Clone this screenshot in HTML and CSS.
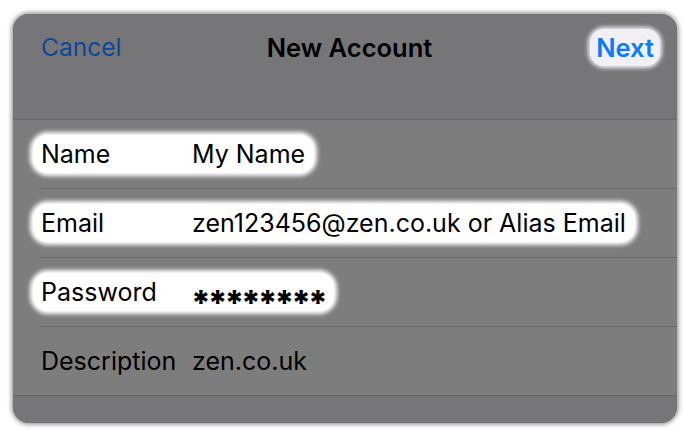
FILE: index.html
```html
<!DOCTYPE html>
<html>
<head>
<meta charset="utf-8">
<link rel="stylesheet" href="styles.css">
</head>
<body>
<div class="frame">
  <header class="header">
    <nav class="nav">
      <span class="cancel">Cancel</span>
      <span class="title">New Account</span>
      <span class="next-blob"><span class="next">Next</span></span>
    </nav>
  </header>
  <div class="form">
    <div class="row">
      <div class="field hl"><span class="label">Name</span><span class="value">My Name</span></div>
    </div>
    <div class="row">
      <div class="field hl"><span class="label">Email</span><span class="value">zen123456@zen.co.uk or Alias Email</span></div>
    </div>
    <div class="row">
      <div class="field hl"><span class="label">Password</span><span class="value pw">********</span></div>
    </div>
    <div class="row last">
      <div class="field"><span class="label">Description</span><span class="value">zen.co.uk</span></div>
    </div>
  </div>
  <div class="footer"></div>
</div>
</body>
</html>
```
FILE: styles.css
```css
html, body {
  margin: 0;
  padding: 0;
  background: #ffffff;
}
body {
  width: 686px;
  height: 434px;
  overflow: hidden;
  font-family: Inter, "Noto Sans", sans-serif;
}
.frame {
  margin: 14px 0 0 13px;
  width: 664px;
  height: 409px;
  border-radius: 16px;
  overflow: hidden;
  background: #7d7d7d;
  box-shadow: 0 0 5px 1px rgba(0,0,0,0.5);
  display: flex;
  flex-direction: column;
}
.header {
  height: 105px;
  background: #767678;
  border-bottom: 1px solid #666668;
}
.nav {
  height: 66px;
  display: flex;
  align-items: center;
  justify-content: space-between;
  padding: 0 17px 0 28px;
  position: relative;
}
.cancel {
  font-size: 24.5px;
  color: #0c4896;
}
.title {
  font-size: 25.5px;
  font-weight: 600;
  color: #000;
  position: absolute;
  left: 9px;
  right: 0;
  text-align: center;
  pointer-events: none;
}
.next-blob {
  background: #f0f0f6;
  border-radius: 14px;
  box-shadow: 0 0 4px 2px #f0f0f6;
  padding: 3px 6px;
  position: relative;
  z-index: 1;
}
.next {
  font-size: 25.5px;
  font-weight: 600;
  color: #0a7bff;
}
.form {
  display: flex;
  flex-direction: column;
}
.row {
  height: 68px;
  border-bottom: 1px solid #686868;
  margin-left: 27px;
  display: flex;
  align-items: center;
}
.row.last {
  margin-left: 0;
  padding-left: 27px;
}
.field {
  display: flex;
  align-items: center;
  height: 38px;
  padding: 0 9px 0 8px;
  margin-left: -7px;
  border-radius: 15px;
  font-size: 25px;
  color: #000;
}
.field.hl {
  background: #ffffff;
  box-shadow: 0 0 4px 3px #ffffff;
}
.label {
  width: 151px;
  flex: none;
}
.value {
  white-space: nowrap;
}
.pw {
  font-weight: 800;
  font-size: 34px;
  line-height: 1;
  letter-spacing: -3.1px;
  padding-top: 22px;
  margin-left: -1px;
}
.footer {
  flex: 1;
  background: #767678;
}
```
